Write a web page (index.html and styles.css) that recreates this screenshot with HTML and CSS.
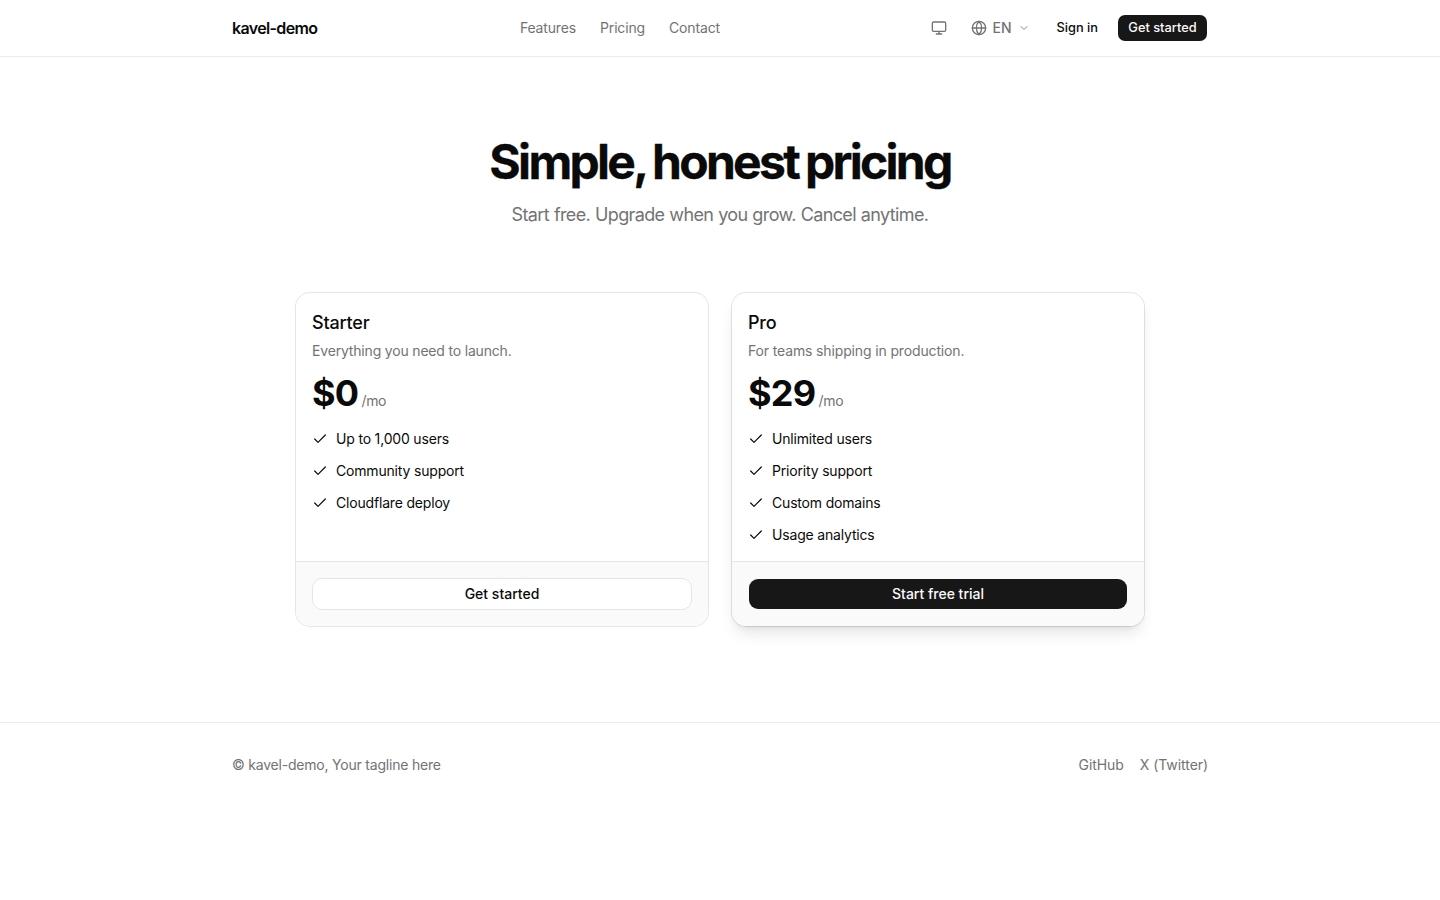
FILE: index.html
```html
<!DOCTYPE html>
<html lang="en">
<head>
<meta charset="utf-8">
<title>Pricing - kavel-demo</title>
<link rel="stylesheet" href="styles.css">
</head>
<body>
<header class="header">
  <div class="container header-inner">
    <a class="brand">kavel-demo</a>
    <nav class="nav"><a>Features</a><a>Pricing</a><a>Contact</a></nav>
    <div class="actions">
      <button class="theme" aria-label="Theme"><svg class="icon" viewBox="0 0 24 24"><rect x="2" y="3" width="20" height="14" rx="2"/><path d="M8 21h8M12 17v4"/></svg></button>
      <button class="lang"><svg class="icon" viewBox="0 0 24 24"><circle cx="12" cy="12" r="10"/><path d="M12 2a14.5 14.5 0 0 0 0 20 14.5 14.5 0 0 0 0-20M2 12h20"/></svg><span>EN</span><svg class="chevron" viewBox="0 0 24 24"><path d="m6 9 6 6 6-6"/></svg></button>
      <a class="signin">Sign in</a>
      <a class="cta">Get started</a>
    </div>
  </div>
</header>
<main class="main">
  <h1 class="title">Simple, honest pricing</h1>
  <p class="subtitle">Start free. Upgrade when you grow. Cancel anytime.</p>
  <div class="plans">
    <section class="card">
      <div class="card-body">
        <h2 class="plan">Starter</h2>
        <p class="desc">Everything you need to launch.</p>
        <div class="price"><span class="amount">$0</span><span class="per">/mo</span></div>
        <ul class="features">
          <li><svg class="icon check" viewBox="0 0 24 24"><path d="M20 6 9 17l-5-5"/></svg><span>Up to 1,000 users</span></li>
          <li><svg class="icon check" viewBox="0 0 24 24"><path d="M20 6 9 17l-5-5"/></svg><span>Community support</span></li>
          <li><svg class="icon check" viewBox="0 0 24 24"><path d="M20 6 9 17l-5-5"/></svg><span>Cloudflare deploy</span></li>
        </ul>
      </div>
      <div class="card-footer"><a class="button outline">Get started</a></div>
    </section>
    <section class="card pro">
      <div class="card-body">
        <h2 class="plan">Pro</h2>
        <p class="desc">For teams shipping in production.</p>
        <div class="price"><span class="amount">$29</span><span class="per">/mo</span></div>
        <ul class="features">
          <li><svg class="icon check" viewBox="0 0 24 24"><path d="M20 6 9 17l-5-5"/></svg><span>Unlimited users</span></li>
          <li><svg class="icon check" viewBox="0 0 24 24"><path d="M20 6 9 17l-5-5"/></svg><span>Priority support</span></li>
          <li><svg class="icon check" viewBox="0 0 24 24"><path d="M20 6 9 17l-5-5"/></svg><span>Custom domains</span></li>
          <li><svg class="icon check" viewBox="0 0 24 24"><path d="M20 6 9 17l-5-5"/></svg><span>Usage analytics</span></li>
        </ul>
      </div>
      <div class="card-footer"><a class="button solid">Start free trial</a></div>
    </section>
  </div>
</main>
<footer class="footer">
  <div class="container footer-inner">
    <p class="copyright">© kavel-demo, Your tagline here</p>
    <div class="links"><a>GitHub</a><a>X (Twitter)</a></div>
  </div>
</footer>
</body>
</html>
```
FILE: styles.css
```css
* { box-sizing: border-box; margin: 0; padding: 0; }
body { background: #fff; color: #0a0a0a; font: 14px/20px Inter, "Liberation Sans", sans-serif; }
button { font: inherit; color: inherit; background: none; border: 0; }
.container { width: 976px; margin: 0 auto; }
.icon { width: 16px; height: 16px; flex: none; }
svg { fill: none; stroke: currentColor; stroke-width: 2; stroke-linecap: round; stroke-linejoin: round; }
.check { stroke-width: 1.8; }
.header { height: 57px; border-bottom: 1px solid #ebebeb; }
.header-inner { height: 56px; padding-right: 1px; display: flex; justify-content: space-between; align-items: center; }
.brand { font-size: 16px; line-height: 24px; font-weight: 600; letter-spacing: -0.65px; }
.nav { display: flex; gap: 24px; color: #737373; letter-spacing: -0.15px; }
.actions { display: flex; align-items: center; padding-left: 8px; }
.theme { display: flex; color: #737373; margin-right: 24px; }
.lang { display: flex; align-items: center; gap: 6px; color: #737373; margin-right: 27px; font-weight: 500; }
.chevron { width: 12px; height: 12px; opacity: .85; }
.signin { font-size: 12.8px; font-weight: 500; margin-right: 20px; }
.cta { height: 26px; width: 89px; border-radius: 7px; background: #171717; color: #fafafa; font-size: 12.8px; line-height: 26px; font-weight: 500; text-align: center; }
.main { padding: 81px 0 96px; text-align: center; }
.title { font-size: 48px; line-height: 48px; font-weight: 700; letter-spacing: -2.7px; word-spacing: -1.8px; -webkit-text-stroke: 0.3px currentColor; }
.subtitle { margin-top: 15px; font-size: 18px; line-height: 28px; letter-spacing: -0.62px; word-spacing: 0.4px; color: #737373; }
.plans { width: 848px; margin: 64px auto 0; display: grid; grid-template-columns: 1fr 1fr; gap: 24px; text-align: left; }
.card { display: flex; flex-direction: column; height: 333px; border-radius: 14px; overflow: hidden; box-shadow: 0 0 0 1px #0a0a0a1a; }
.pro { box-shadow: 0 0 0 1px #0a0a0a1a, 0 10px 15px -3px #0000001a, 0 4px 6px -4px #0000001a; background: #fff; }
.card-body { flex: 1; padding: 16px; }
.plan { font-size: 18px; line-height: 28px; font-weight: 500; letter-spacing: -0.2px; }
.desc { margin-top: 4px; color: #737373; letter-spacing: -0.18px; }
.pro .desc { letter-spacing: -0.14px; }
.price { margin-top: 12px; display: flex; align-items: baseline; gap: 3px; }
.amount { font-size: 36px; line-height: 40px; font-weight: 700; letter-spacing: -0.7px; }
.per { color: #737373; letter-spacing: -0.35px; }
.features { margin-top: 16px; list-style: none; display: grid; gap: 12px; letter-spacing: -0.18px; }
.features li { display: flex; align-items: center; gap: 8px; }
.card-footer { flex: none; height: 65px; padding: 16px; border-top: 1px solid #e5e5e5; background: #fafafa; }
.button { display: block; height: 32px; border: 1px solid #e5e5e5; border-radius: 10px; line-height: 30px; font-weight: 500; text-align: center; }
.outline { background: #fff; }
.solid { background: #171717; color: #fafafa; border-color: transparent; background-clip: padding-box; }
.footer { border-top: 1px solid #ebebeb; padding-top: 32px; color: #737373; }
.footer-inner { display: flex; justify-content: space-between; }
.copyright { letter-spacing: -0.21px; }
.links { display: flex; gap: 16px; letter-spacing: -0.06px; }
```
